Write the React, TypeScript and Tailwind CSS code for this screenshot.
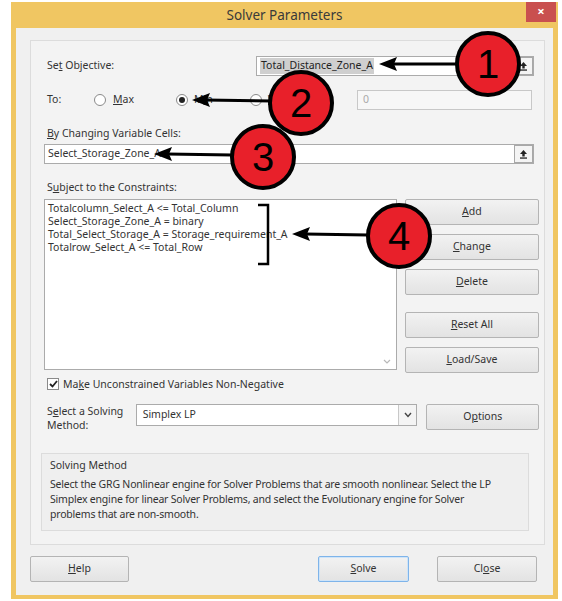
import { FC, ReactNode } from "react";

const font = { fontFamily: '"Noto Sans", "Open Sans", sans-serif' };

// underline the access-key letter of a label
const Key: FC<{ text: string; at: number }> = ({ text, at }) => (
  <span>
    {text.slice(0, at)}
    <span className="underline underline-offset-1">{text[at]}</span>
    {text.slice(at + 1)}
  </span>
);

const Btn: FC<{ children: ReactNode; className?: string; primary?: boolean }> = ({
  children,
  className,
  primary,
}) => (
  <div
    className={
      "flex items-center justify-center rounded-[2px] border bg-gradient-to-b from-[#f2f2f2] to-[#e3e3e3] text-[10.5px] text-[#333] " +
      (primary ? "border-[#7eb4ea] shadow-[inset_0_0_0_1px_#cfe4f8] " : "border-[#b4b4b4] ") +
      (className ?? "")
    }
  >
    {children}
  </div>
);

const RefIcon: FC = () => (
  <div className="flex h-[18px] w-[19px] items-center justify-center border border-[#a8a8a8] bg-[#f4f4f4]">
    <svg width="9" height="10" viewBox="0 0 9 10">
      <path d="M4.5 1 L8 5 H5.7 V7.5 H3.3 V5 H1 Z" fill="#222" />
      <rect x="1" y="8.4" width="7" height="1.3" fill="#222" />
    </svg>
  </div>
);

const Radio: FC<{ on?: boolean }> = ({ on }) => (
  <div className="flex h-[12px] w-[12px] items-center justify-center rounded-full border border-[#8a8a8a] bg-white">
    {on && <div className="h-[6px] w-[6px] rounded-full bg-[#222]" />}
  </div>
);

const Badge: FC<{ n: string; x: number; y: number }> = ({ n, x, y }) => (
  <div
    className="absolute flex h-[66px] w-[66px] items-center justify-center rounded-full border-[4px] border-black bg-[#e8202a] text-[40px] leading-none text-black"
    style={{ left: x - 33, top: y - 33, fontFamily: '"Liberation Sans", Arial, sans-serif' }}
  >
    {n}
  </div>
);

const App: FC = () => {
  return (
    <div className="relative h-[601px] w-[562px] overflow-hidden bg-white pl-[11px] pt-[2px]" style={font}>
      <div className="flex h-[597px] w-[547px] flex-col bg-[#f0c662]">
        {/* title bar */}
        <div className="relative flex h-[26px] items-center justify-center">
          <span className="text-[13.5px] text-[#3a3a3a]">Solver Parameters</span>
          <div className="absolute right-[2px] top-0 flex h-[20px] w-[30px] items-center justify-center bg-[#c9504f] text-[13px] font-bold text-white">
            ×
          </div>
        </div>

        {/* client area */}
        <div className="mx-[5px] mb-[4px] flex flex-1 flex-col bg-[#f0f0f0] pl-[14px] pr-[8px] pt-[12px] text-[10.5px] text-[#333]">
          <div className="flex h-[505px] flex-col border border-[#dcdcdc] bg-[#f3f3f3] pl-[13px] pr-[5px] pt-[15px]">
            {/* objective */}
            <div className="flex h-[20px] items-center">
              <span className="pl-[3px]">
                <Key text="Set Objective:" at={2} />
              </span>
              <div className="ml-auto mr-[5px] flex h-[20px] w-[278px] items-center justify-between border border-[#ababab] bg-white pl-[3px]">
                <span className="bg-[#cfcfcf] px-[1px] text-[#222]">Total_Distance_Zone_A</span>
                <RefIcon />
              </div>
            </div>

            {/* to */}
            <div className="mt-[14px] flex h-[20px] items-center">
              <span className="w-[50px] pl-[3px]">To:</span>
              <Radio />
              <span className="ml-[7px] w-[63px]">
                <Key text="Max" at={0} />
              </span>
              <Radio on />
              <span className="ml-[6px] w-[56px]">
                <Key text="Min" at={1} />
              </span>
              <Radio />
              <span className="ml-[6px]">
                <Key text="Value Of:" at={0} />
              </span>
              <div className="ml-auto mr-[7px] flex h-[20px] w-[175px] items-center border border-[#c8c8c8] bg-[#f7f7f7] pl-[5px] text-[#aaa]">
                0
              </div>
            </div>

            <div className="mt-[16px] pl-[3px]">
              <Key text="By Changing Variable Cells:" at={0} />
            </div>
            <div className="mr-[5px] mt-[2px] flex h-[20px] items-center justify-between border border-[#ababab] bg-white pl-[3px]">
              <span>Select_Storage_Zone_A</span>
              <RefIcon />
            </div>

            <div className="mt-[16px] pl-[3px]">
              <Key text="Subject to the Constraints:" at={1} />
            </div>

            {/* constraints + side buttons */}
            <div className="mt-[3px] flex">
              <div className="relative h-[171px] w-[355px] border border-[#ababab] bg-white px-[3px] pt-[2px] leading-[13px]">
                <div>Totalcolumn_Select_A &lt;= Total_Column</div>
                <div>Select_Storage_Zone_A = binary</div>
                <div>Total_Select_Storage_A = Storage_requirement_A</div>
                <div>Totalrow_Select_A &lt;= Total_Row</div>
                <svg className="absolute bottom-[4px] right-[5px]" width="8" height="6" viewBox="0 0 8 6">
                  <path d="M1 1 L4 4 L7 1" stroke="#b8b8b8" strokeWidth="1.2" fill="none" />
                </svg>
              </div>
              <div className="ml-[8px] flex w-[135px] flex-col">
                <Btn className="h-[26px]">
                  <Key text="Add" at={0} />
                </Btn>
                <Btn className="mt-[9px] h-[26px]">
                  <Key text="Change" at={0} />
                </Btn>
                <Btn className="mt-[9px] h-[26px]">
                  <Key text="Delete" at={0} />
                </Btn>
                <Btn className="mt-[17px] h-[26px]">
                  <Key text="Reset All" at={0} />
                </Btn>
                <Btn className="mt-[9px] h-[26px]">
                  <Key text="Load/Save" at={0} />
                </Btn>
              </div>
            </div>

            {/* non-negative */}
            <div className="mt-[4px] flex items-center pl-[3px]">
              <div className="flex h-[12px] w-[12px] items-center justify-center border border-[#8a8a8a] bg-white">
                <svg width="9" height="8" viewBox="0 0 9 8">
                  <path d="M1 4 L3.5 6.5 L8 1" stroke="#222" strokeWidth="1.8" fill="none" />
                </svg>
              </div>
              <span className="ml-[4px]">
                <Key text="Make Unconstrained Variables Non-Negative" at={2} />
              </span>
            </div>

            {/* solving method */}
            <div className="mt-[12px] flex items-start">
              <div className="w-[92px] pl-[3px] leading-[14px]">
                <Key text="Select a Solving" at={1} />
                <div>Method:</div>
              </div>
              <div className="flex h-[22px] w-[283px] items-center border border-[#ababab] bg-white pl-[6px]">
                <span className="flex-1">Simplex LP</span>
                <div className="flex h-full w-[18px] items-center justify-center border-l border-[#c8c8c8] bg-[#f4f4f4]">
                  <svg width="8" height="6" viewBox="0 0 8 6">
                    <path d="M1 1 L4 4.5 L7 1" stroke="#444" strokeWidth="1.4" fill="none" />
                  </svg>
                </div>
              </div>
              <Btn className="ml-[9px] h-[26px] w-[113px]">
                <Key text="Options" at={1} />
              </Btn>
            </div>

            <div className="mb-[13px] ml-[-3px] mr-[10px] mt-auto flex h-[78px] flex-col border border-[#dcdcdc] bg-[#efefef] pl-[8px] pt-[4px] leading-[15px]">
              <div>Solving Method</div>
              <div className="mt-[4px] pr-[4px] tracking-[-0.2px]">
                Select the GRG Nonlinear engine for Solver Problems that are smooth nonlinear. Select the LP
                <br />
                Simplex engine for linear Solver Problems, and select the Evolutionary engine for Solver
                <br />
                problems that are non-smooth.
              </div>
            </div>
          </div>

          {/* footer */}
          <div className="mt-[11px] flex pr-[8px]">
            <Btn className="h-[26px] w-[99px]">
              <Key text="Help" at={0} />
            </Btn>
            <Btn primary className="ml-auto h-[26px] w-[91px]">
              <Key text="Solve" at={0} />
            </Btn>
            <Btn className="ml-[28px] h-[26px] w-[100px]">
              <Key text="Close" at={2} />
            </Btn>
          </div>
        </div>
      </div>

      {/* callout arrows and bracket */}
      <svg className="pointer-events-none absolute inset-0" width="562" height="601">
        <g stroke="#000" strokeWidth="3" fill="none">
          <line x1="392" y1="64" x2="458" y2="64" />
          <line x1="205" y1="100" x2="272" y2="101" />
          <line x1="167" y1="154" x2="232" y2="155" />
          <line x1="305" y1="234" x2="368" y2="235" />
          <path d="M258 205 H268 V264 H258" strokeWidth="2.5" />
        </g>
        <g fill="#000">
          <path d="M379 64 L397 57 L394 64 L397 71 Z" />
          <path d="M192 100 L210 93 L207 100 L210 107 Z" />
          <path d="M154 154 L172 147 L169 154 L172 161 Z" />
          <path d="M292 234 L310 227 L307 234 L310 241 Z" />
        </g>
      </svg>
      <Badge n="1" x={488} y={64} />
      <Badge n="2" x={301} y={103} />
      <Badge n="3" x={263} y={157} />
      <Badge n="4" x={399} y={236} />
    </div>
  );
};

export default App;
